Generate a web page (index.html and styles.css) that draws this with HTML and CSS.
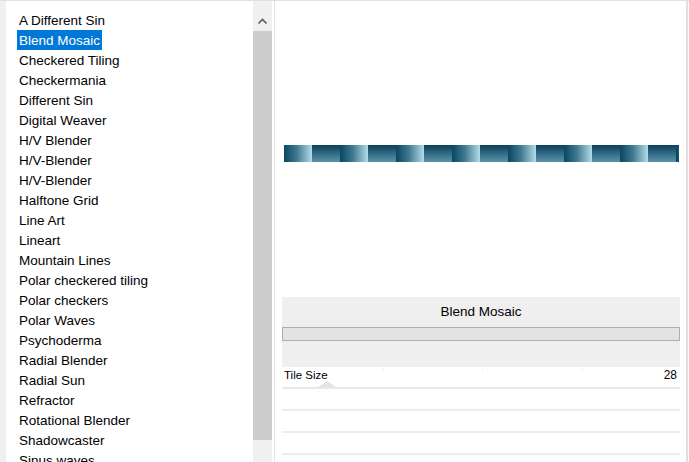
FILE: index.html
```html
<!DOCTYPE html>
<html>
<head>
	<meta charset="UTF-8">
	<title>Filter Gallery</title>
	<link rel="stylesheet" href="styles.css">
</head>
<body>
	<div class="app">
		<div class="list-pane">
			<ul class="filter-list">
				<li><span>A Different Sin</span></li>
				<li class="selected"><span>Blend Mosaic</span></li>
				<li><span>Checkered Tiling</span></li>
				<li><span>Checkermania</span></li>
				<li><span>Different Sin</span></li>
				<li><span>Digital Weaver</span></li>
				<li><span>H/V Blender</span></li>
				<li><span>H/V-Blender</span></li>
				<li><span>H/V-Blender</span></li>
				<li><span>Halftone Grid</span></li>
				<li><span>Line Art</span></li>
				<li><span>Lineart</span></li>
				<li><span>Mountain Lines</span></li>
				<li><span>Polar checkered tiling</span></li>
				<li><span>Polar checkers</span></li>
				<li><span>Polar Waves</span></li>
				<li><span>Psychoderma</span></li>
				<li><span>Radial Blender</span></li>
				<li><span>Radial Sun</span></li>
				<li><span>Refractor</span></li>
				<li><span>Rotational Blender</span></li>
				<li><span>Shadowcaster</span></li>
				<li><span>Sinus waves</span></li>
			</ul>
			<div class="scrollbar">
				<div class="scroll-btn">
					<svg width="9" height="6" viewBox="0 0 9 6"><path d="M0.5 5.5 L4.5 1.5 L8.5 5.5" fill="none" stroke="#606060" stroke-width="1.6"/></svg>
				</div>
				<div class="scroll-thumb"></div>
				<div class="scroll-track"></div>
			</div>
		</div>
		<div class="divider"></div>
		<div class="right-pane">
			<div class="preview">
				<div class="mosaic">
					<div class="tile h"></div><div class="tile v"></div>
					<div class="tile h"></div><div class="tile v"></div>
					<div class="tile h"></div><div class="tile v"></div>
					<div class="tile h"></div><div class="tile v"></div>
					<div class="tile h"></div><div class="tile v"></div>
					<div class="tile h"></div><div class="tile v"></div>
					<div class="tile h"></div><div class="tile v"></div>
					<div class="tile h"></div>
				</div>
			</div>
			<div class="settings">
				<div class="settings-head">
					<div class="settings-title">Blend Mosaic</div>
					<div class="settings-bar"></div>
				</div>
				<div class="param-row">
					<span class="param-name">Tile Size</span>
					<span class="param-value">28</span>
					<span class="tick t1"></span>
					<span class="tick t2"></span>
					<span class="tick t3"></span>
					<span class="thumb"></span>
				</div>
				<div class="empty-row"></div>
				<div class="empty-row"></div>
				<div class="empty-row"></div>
			</div>
		</div>
	</div>
</body>
</html>
```

FILE: styles.css
```css
html, body {
	margin: 0;
	padding: 0;
	background-color: #ffffff;
	font-family: "Liberation Sans", Arial, sans-serif;
	font-size: 13.5px;
	color: #000000;
	overflow: hidden;
}

.app {
	display: flex;
	height: 461px;
	border-top: 1px solid #e0e0e0;
	overflow: hidden;
}

.list-pane {
	display: flex;
	width: 266px;
	padding-left: 6px;
	background-color: #f0f0f0;
}

.filter-list {
	list-style: none;
	margin: 0;
	padding: 9px 0 0 11px;
	width: 236px;
	background-color: #ffffff;
}

.filter-list li {
	height: 20px;
	white-space: nowrap;
}

.filter-list li span {
	display: inline-block;
	padding: 1px 2px 0 2px;
	height: 19px;
	line-height: 20px;
	overflow: hidden;
}

.filter-list li.selected span {
	background-color: #0078d7;
	color: #ffffff;
}

.scrollbar {
	display: flex;
	flex-direction: column;
	width: 19px;
	margin-top: 9px;
	background-color: #f0f0f0;
}

.scroll-btn {
	height: 21px;
	display: flex;
	align-items: center;
	justify-content: center;
	background-color: #f0f0f0;
}

.scroll-thumb {
	height: 409px;
	background-color: #cdcdcd;
}

.scroll-track {
	flex: 1;
	background-color: #f0f0f0;
}

.divider {
	width: 2px;
	background-color: #ffffff;
	border-right: 1px solid #e3e3e3;
}

.right-pane {
	width: 411px;
	border-right: 2px solid #e0e0e0;
	display: flex;
	flex-direction: column;
}

.preview {
	height: 296px;
	padding: 144px 7px 0 9px;
	box-sizing: border-box;
}

.mosaic {
	display: flex;
	width: 395px;
	height: 17px;
	overflow: hidden;
}

.tile {
	flex: none;
	width: 28px;
	height: 17px;
}

.tile.h {
	background: linear-gradient(to right, #0b4660, #3f7890 45%, #b3dce6);
}

.tile.v {
	background: linear-gradient(to bottom, #0c3f58, #336f88 55%, #5e93a6);
}

.settings {
	margin: 0 6px 0 7px;
}

.settings-head {
	height: 70px;
	background-color: #efefef;
	padding-top: 6px;
	box-sizing: border-box;
}

.settings-title {
	text-align: center;
	height: 24px;
	line-height: 18px;
}

.settings-bar {
	height: 12px;
	border: 1px solid #adadad;
	background-color: #e3e3e3;
}

.param-row {
	position: relative;
	display: flex;
	justify-content: space-between;
	height: 20px;
	line-height: 17px;
	padding: 0 3px 0 2px;
	font-size: 11.5px;
	border-bottom: 2px solid #e9e9e9;
}

.param-value {
	font-size: 12px;
}

.tick {
	position: absolute;
	top: 2px;
	width: 1px;
	height: 2px;
	background-color: #eaeaea;
}

.tick.t1 { left: 101px; }
.tick.t2 { left: 200px; }
.tick.t3 { left: 300px; }

.thumb {
	position: absolute;
	left: 36px;
	bottom: 0;
	width: 0;
	height: 0;
	border-left: 9px solid transparent;
	border-right: 9px solid transparent;
	border-bottom: 6px solid #e4e4e4;
}

.empty-row {
	height: 20px;
	border-bottom: 2px solid #ededed;
}
```
